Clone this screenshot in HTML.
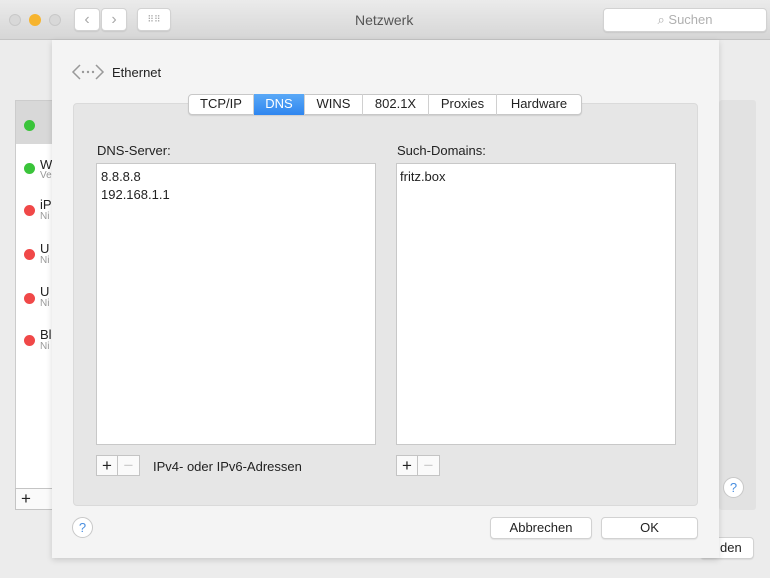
<!DOCTYPE html>
<html><head><style>
*{box-sizing:border-box;margin:0;padding:0}
body{width:770px;height:578px;background:#ececec;font-family:"Liberation Sans",sans-serif;font-size:13px;color:#222;position:relative;overflow:hidden}
.a{position:absolute}
.tb{left:0;top:0;width:770px;height:40px;background:linear-gradient(#ebebeb,#d6d6d6);border-bottom:1px solid #c4c4c4}
.dot{width:12px;height:12px;border-radius:50%}
.btn{background:#fff;border:1px solid #d2d2d2;border-radius:4px;box-shadow:0 1px 1px rgba(0,0,0,.08)}
.box{background:#fff;border:1px solid #c8c8c8}
.sd{width:11px;height:11px;border-radius:50%}
.help{width:21px;height:21px;border-radius:50%;background:#fff;border:1px solid #c8c8c8;color:#4a8fe0;font-size:13px;text-align:center;line-height:19px}
.pm{border:1px solid #c4c4c4;background:#fafafa;height:21px;width:44px;display:flex}
.pm span{width:22px;text-align:center;line-height:19px;font-size:17px}
.tab{top:94px;height:21px;line-height:20px;text-align:center;font-size:13px;border-right:1px solid #d0d0d0}
</style></head><body>
<div class="a tb"></div>
<div class="a dot" style="left:9px;top:14px;background:#d8d8d8;border:1px solid #c8c8c8"></div>
<div class="a dot" style="left:29px;top:14px;background:#f6b42e"></div>
<div class="a dot" style="left:49px;top:14px;background:#d8d8d8;border:1px solid #c8c8c8"></div>
<div class="a btn" style="left:74px;top:8px;width:26px;height:23px;color:#aaa;text-align:center;line-height:21px;font-size:16px">&lsaquo;</div>
<div class="a btn" style="left:101px;top:8px;width:26px;height:23px;color:#aaa;text-align:center;line-height:21px;font-size:16px">&rsaquo;</div>
<div class="a btn" style="left:137px;top:8px;width:34px;height:23px;color:#aaa;text-align:center;line-height:21px;font-size:9px">⠿⠿</div>
<div class="a" style="left:355px;top:12px;font-size:14px;color:#555">Netzwerk</div>
<div class="a btn" style="left:603px;top:8px;width:164px;height:24px;color:#b0b0b0;text-align:center;line-height:22px">&#x2315; Suchen</div>

<div class="a" style="left:15px;top:100px;width:40px;height:410px;background:#fff;border:1px solid #ccc"></div>
<div class="a" style="left:16px;top:101px;width:40px;height:43px;background:#d8d8d8"></div>
<div class="a sd" style="left:24px;top:120px;background:#3ac43a"></div>
<div class="a sd" style="left:24px;top:163px;background:#3ac43a"></div>
<div class="a" style="left:40px;top:157px;font-size:13px">W</div>
<div class="a" style="left:40px;top:170px;font-size:10px;color:#999">Ve</div>
<div class="a sd" style="left:24px;top:205px;background:#f04848"></div>
<div class="a" style="left:40px;top:197px">iP</div><div class="a" style="left:40px;top:211px;font-size:10px;color:#999">Ni</div>
<div class="a sd" style="left:24px;top:249px;background:#f04848"></div>
<div class="a" style="left:40px;top:241px">U</div><div class="a" style="left:40px;top:255px;font-size:10px;color:#999">Ni</div>
<div class="a sd" style="left:24px;top:293px;background:#f04848"></div>
<div class="a" style="left:40px;top:284px">U</div><div class="a" style="left:40px;top:298px;font-size:10px;color:#999">Ni</div>
<div class="a sd" style="left:24px;top:335px;background:#f04848"></div>
<div class="a" style="left:40px;top:327px">Bl</div><div class="a" style="left:40px;top:341px;font-size:10px;color:#999">Ni</div>
<div class="a" style="left:15px;top:488px;width:40px;height:22px;background:#fafafa;border:1px solid #c4c4c4;font-size:17px;line-height:19px;padding-left:5px">+</div>
<div class="a" style="left:719px;top:100px;width:37px;height:410px;background:#e2e2e2;border-radius:3px"></div>
<div class="a help" style="left:723px;top:477px">?</div>
<div class="a btn" style="left:700px;top:537px;width:54px;height:22px;line-height:20px;padding-left:19px">den</div>

<div class="a" style="left:52px;top:40px;width:667px;height:518px;background:#f4f4f4;box-shadow:0 2px 6px rgba(0,0,0,.15)"></div>
<svg class="a" style="left:71px;top:63px" width="34" height="18" viewBox="0 0 34 18"><path d="M9 2 L2 9 L9 16 M25 2 L32 9 L25 16" fill="none" stroke="#999" stroke-width="1.5"/><circle cx="12" cy="9" r="1.2" fill="#999"/><circle cx="17" cy="9" r="1.2" fill="#999"/><circle cx="22" cy="9" r="1.2" fill="#999"/></svg>
<div class="a" style="left:112px;top:65px;font-size:13px">Ethernet</div>
<div class="a" style="left:73px;top:103px;width:625px;height:403px;background:#e6e6e6;border:1px solid #dadada;border-radius:4px"></div>
<div class="a" style="left:188px;top:94px;width:394px;height:21px;background:#fff;border:1px solid #c8c8c8;border-radius:4px;box-shadow:0 1px 1px rgba(0,0,0,.1)"></div>
<div class="a tab" style="left:189px;width:65px">TCP/IP</div>
<div class="a tab" style="left:254px;width:51px;background:linear-gradient(#5aa9f7,#2f86ef);color:#fff">DNS</div>
<div class="a tab" style="left:305px;width:58px">WINS</div>
<div class="a tab" style="left:363px;width:66px">802.1X</div>
<div class="a tab" style="left:429px;width:68px">Proxies</div>
<div class="a tab" style="left:497px;width:84px;border:none">Hardware</div>
<div class="a" style="left:97px;top:143px">DNS-Server:</div>
<div class="a" style="left:397px;top:143px">Such-Domains:</div>
<div class="a box" style="left:96px;top:163px;width:280px;height:282px;padding:4px 4px;line-height:18px">8.8.8.8<br>192.168.1.1</div>
<div class="a box" style="left:396px;top:163px;width:280px;height:282px;padding:4px 3px;line-height:18px">fritz.box</div>
<div class="a pm" style="left:96px;top:455px"><span style="border-right:1px solid #c4c4c4">+</span><span style="color:#ccc">−</span></div>
<div class="a" style="left:153px;top:459px">IPv4- oder IPv6-Adressen</div>
<div class="a pm" style="left:396px;top:455px"><span style="border-right:1px solid #c4c4c4">+</span><span style="color:#ccc">−</span></div>
<div class="a help" style="left:72px;top:517px">?</div>
<div class="a btn" style="left:490px;top:517px;width:102px;height:22px;text-align:center;line-height:20px">Abbrechen</div>
<div class="a btn" style="left:601px;top:517px;width:97px;height:22px;text-align:center;line-height:20px">OK</div>
</body></html>
